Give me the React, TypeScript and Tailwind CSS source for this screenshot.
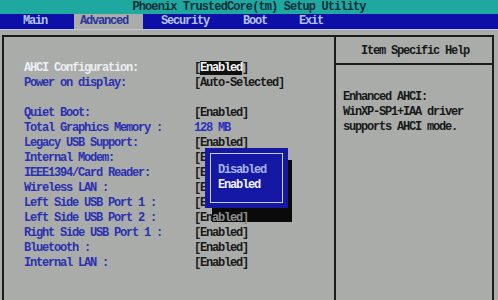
import React from "react";

const rows: { label: string; value: string; blue?: boolean; sel?: boolean }[] = [
  { label: "AHCI Configuration:", value: "Enabled", sel: true },
  { label: "Power on display:", value: "[Auto-Selected]" },
  { label: "", value: "" },
  { label: "Quiet Boot:", value: "[Enabled]" },
  { label: "Total Graphics Memory :", value: "128 MB", blue: true },
  { label: "Legacy USB Support:", value: "[Enabled]" },
  { label: "Internal Modem:", value: "[E" },
  { label: "IEEE1394/Card Reader:", value: "[E" },
  { label: "Wireless LAN :", value: "[E" },
  { label: "Left Side USB Port 1 :", value: "[E" },
  { label: "Left Side USB Port 2 :", value: "SHADOW" },
  { label: "Right Side USB Port 1 :", value: "[Enabled]" },
  { label: "Bluetooth :", value: "[Enabled]" },
  { label: "Internal LAN :", value: "[Enabled]" },
];

export default function App() {
  return (
    <div
      className="relative w-[498px] h-[300px] overflow-hidden bg-[#a9aca9] text-[12px] leading-[15px] tracking-[-1.2px]"
      style={{ fontFamily: '"Liberation Mono", "DejaVu Sans Mono", monospace' }}
    >
      {/* Title bar */}
      <div className="h-[14px] bg-[#1fa8a0] flex items-center justify-center text-[#10303a] tracking-[-0.9px] leading-[14px] font-bold">
        Phoenix TrustedCore(tm) Setup Utility
      </div>
      {/* Menu bar */}
      <div className="h-[15px] bg-[#0c10a8] flex items-center text-[#b4c2ea] leading-[15px] font-bold">
        <span className="ml-[23px]">Main</span>
        <span className="ml-[27px] w-[69px] h-[15px] bg-[#a9aca9] text-[#2a34a0] pl-[6px]">Advanced</span>
        <span className="ml-[18px]">Security</span>
        <span className="ml-[34px]">Boot</span>
        <span className="ml-[32px]">Exit</span>
      </div>
      <div className="h-[1px] bg-[#c4c8d4]" />
      {/* Panel */}
      <div className="mt-[5px] ml-[2px] w-[492px] h-[270px] border-t-2 border-l-2 border-r-2 border-[#1c1c1c] flex font-bold">
        <div className="w-[330px] pt-[24px]">
          {rows.map((r, i) => (
            <div key={i} className="flex h-[15px]">
              <span
                className={
                  "ml-[20px] w-[170px] " +
                  (r.sel ? "text-[#eceef4]" : "text-[#2c30b0]")
                }
              >
                {r.label}
              </span>
              {r.sel ? (
                <span className="text-[#181818]">
                  [<span className="bg-[#101010] text-[#f4f4f4]">{r.value}</span>]
                </span>
              ) : r.value === "SHADOW" ? (
                <span className="text-[#181818]">
                  [En
                  <span className="relative z-10 text-[#8c8e8c]">abled]</span>
                </span>
              ) : (
                <span className={r.blue ? "text-[#2c30c0]" : "text-[#181818]"}>{r.value}</span>
              )}
            </div>
          ))}
        </div>
        <div className="w-[2px] bg-[#1c1c1c]" />
        <div className="flex-1 flex flex-col">
          <div className="h-[28px] border-b-2 border-[#1c1c1c] flex items-center justify-center text-[#181818] pl-[2px] pt-[3px]">
            Item Specific Help
          </div>
          <div className="pt-[25px] pl-[7px] text-[#181818]">
            <div>Enhanced AHCI:</div>
            <div>WinXP-SP1+IAA driver</div>
            <div>supports AHCI mode.</div>
          </div>
        </div>
      </div>
      {/* Popup shadow */}
      <div className="absolute left-[212px] top-[160px] w-[80px] h-[62px] bg-[#0a0a0a]" />
      {/* Popup */}
      <div className="absolute left-[205px] top-[148px] w-[83px] h-[60px] bg-[#1418a2] p-[5px] z-20 font-bold">
        <div className="w-full h-full border border-[#c8cce4] pl-[7px] pt-[9px]">
          <div className="text-[#a8b4ea]">Disabled</div>
          <div className="text-[#f4f4ff]">Enabled</div>
        </div>
      </div>
    </div>
  );
}
